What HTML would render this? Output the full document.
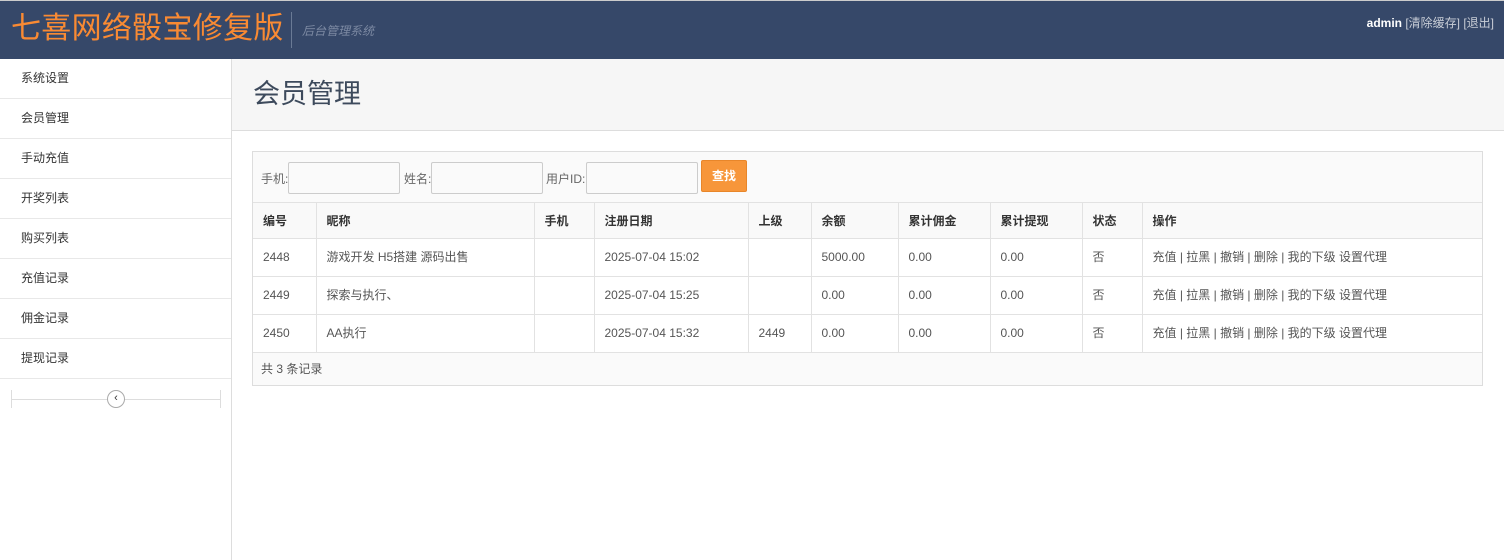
<!DOCTYPE html>
<html><head><meta charset="utf-8"><style>
*{margin:0;padding:0;box-sizing:border-box}
body{width:1504px;height:560px;overflow:hidden;font-family:"Liberation Sans","Noto Sans CJK SC",sans-serif;font-size:12px;color:#555;background:#fff;position:relative}
.top{position:absolute;left:0;top:0;width:1504px;height:59px;background:#364869;border-top:1px solid #ccc}
.logo{position:absolute;left:11px;top:9px;font-size:30px;color:#f98a33;line-height:38px;letter-spacing:0.3px}
.sep{position:absolute;left:291px;top:11px;width:1px;height:36px;background:#6a7a95}
.sub{position:absolute;left:302px;top:21px;font-size:12px;color:#7d8aa3;font-style:italic}
.user{position:absolute;right:10px;top:13px;color:#c8cdd6;font-size:12px}
.user b{color:#fff}
.side{position:absolute;left:0;top:59px;width:232px;height:501px;border-right:1px solid #ddd;background:#fff}
.side div.it{height:40px;border-bottom:1px solid #e8e8e8;padding-left:21px;line-height:38px;font-size:12px;color:#333}
.tog{position:absolute;left:11px;top:330px;width:210px;height:20px}
.tog .l{position:absolute;left:0;right:0;top:10px;height:1px;background:#ddd}
.tog .a,.tog .b{position:absolute;top:1px;width:1px;height:18px;background:#ddd}
.tog .a{left:0}.tog .b{right:0}
.tog .c{position:absolute;left:96px;top:1px;width:18px;height:18px;border:1px solid #aaa;border-radius:50%;background:#fff;font-size:11px;line-height:15px;text-align:center;color:#333}
.ph{position:absolute;left:232px;top:59px;width:1272px;height:72px;background:#f6f6f6;border-bottom:1px solid #ddd}
.ph h1{position:absolute;left:21px;top:13px;font-size:27px;font-weight:normal;color:#3d4a5c}
.box{position:absolute;left:252px;top:151px;width:1231px;height:235px;border:1px solid #ddd;background:#fafafa}
.sr{position:absolute;left:0;top:0;height:51px;width:100%}
.sr span{position:absolute;top:18px;font-size:12px;color:#666}
.sr .in{position:absolute;top:10px;width:112px;height:32px;border:1px solid #ccc;background:#fafafa;border-radius:2px}
.btn{position:absolute;left:448px;top:8px;width:46px;height:32px;background:#f7963a;border:1px solid #e8862a;color:#fff;font-weight:bold;text-align:center;line-height:30px;border-radius:2px}
table{position:absolute;left:0;top:50px;border-collapse:collapse;width:1229px;background:#fff}
td,th{border:1px solid #e2e2e2;padding-left:10px;text-align:left;font-size:12px;color:#555;font-weight:normal;vertical-align:middle;line-height:16px}
th{height:36px;background:#f9f9f9;font-weight:bold;color:#333}
td{height:38px;padding-bottom:2px}
tr td:first-child,tr th:first-child{border-left:none}
tr td:last-child,tr th:last-child{border-right:none}
.foot{position:absolute;left:0;top:202px;width:100%;height:33px;line-height:30px;padding-left:8px;color:#555}
</style></head><body>
<div class="top"><div class="logo">七喜网络骰宝修复版</div><div class="sep"></div><div class="sub">后台管理系统</div><div class="user"><b>admin</b> [清除缓存] [退出]</div></div>
<div class="side">
<div class="it">系统设置</div><div class="it">会员管理</div><div class="it">手动充值</div><div class="it">开奖列表</div><div class="it">购买列表</div><div class="it">充值记录</div><div class="it">佣金记录</div><div class="it">提现记录</div>
<div class="tog" style="top:330px"><div class="l"></div><div class="a"></div><div class="b"></div><div class="c">‹</div></div>
</div>
<div class="ph"><h1>会员管理</h1></div>
<div class="box">
<div class="sr"><span style="left:8px">手机:</span><div class="in" style="left:35px"></div><span style="left:151px">姓名:</span><div class="in" style="left:178px"></div><span style="left:293px">用户ID:</span><div class="in" style="left:333px"></div><div class="btn">查找</div></div>
<table>
<tr><th style="width:63px">编号</th><th style="width:218px">昵称</th><th style="width:60px">手机</th><th style="width:154px">注册日期</th><th style="width:63px">上级</th><th style="width:87px">余额</th><th style="width:92px">累计佣金</th><th style="width:92px">累计提现</th><th style="width:60px">状态</th><th>操作</th></tr>
<tr><td>2448</td><td>游戏开发 H5搭建 源码出售</td><td></td><td>2025-07-04 15:02</td><td></td><td>5000.00</td><td>0.00</td><td>0.00</td><td>否</td><td>充值 | 拉黑 | 撤销 | 删除 | 我的下级 设置代理</td></tr>
<tr><td>2449</td><td>探索与执行、</td><td></td><td>2025-07-04 15:25</td><td></td><td>0.00</td><td>0.00</td><td>0.00</td><td>否</td><td>充值 | 拉黑 | 撤销 | 删除 | 我的下级 设置代理</td></tr>
<tr><td>2450</td><td>AA执行</td><td></td><td>2025-07-04 15:32</td><td>2449</td><td>0.00</td><td>0.00</td><td>0.00</td><td>否</td><td>充值 | 拉黑 | 撤销 | 删除 | 我的下级 设置代理</td></tr>
</table>
<div class="foot">共 3 条记录</div>
</div>
</body></html>
